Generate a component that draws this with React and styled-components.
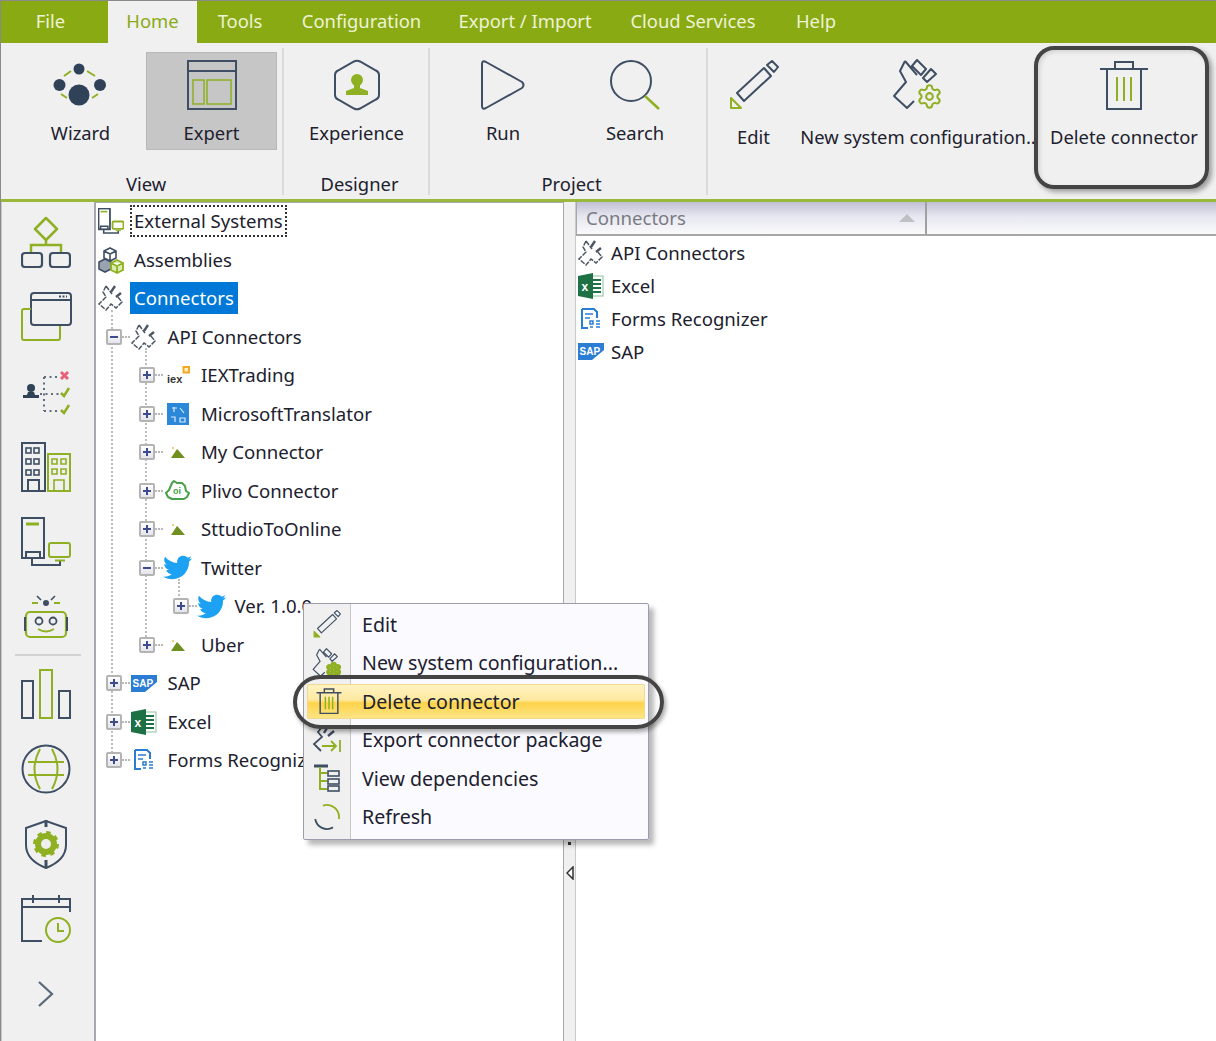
import styled, { createGlobalStyle } from 'styled-components';
import { Settings } from 'lucide-react';
import { FaTwitter } from 'react-icons/fa';

const NAVY = '#3f4f63';
const GREEN = '#8fb022';

const GlobalStyle = createGlobalStyle`
  html, body {
    margin: 0;
    padding: 0;
    background: #fff;
  }
  * {
    box-sizing: border-box;
  }
`;

const Page = styled.div`
  position: relative;
  width: 1216px;
  height: 1041px;
  overflow: hidden;
  display: flex;
  flex-direction: column;
  border-top: 1px solid #8a8a8a;
  border-left: 1px solid #8a8a8a;
  font-family: 'Noto Sans', 'Open Sans', sans-serif;
  font-size: 18.4px;
  color: #20202e;
`;

const MenuBar = styled.div`
  height: 42px;
  flex: none;
  display: flex;
  background: #8aaa14;
`;

const Tab = styled.div`
  width: ${(p) => p.$w}px;
  padding: 0 ${(p) => p.$pr || 0}px 4px 0;
  display: flex;
  align-items: center;
  justify-content: center;
  white-space: nowrap;
  color: ${(p) => (p.$active ? '#8aaa14' : '#eef3d6')};
  background: ${(p) => (p.$active ? '#f0f0f0' : 'transparent')};
`;

const Ribbon = styled.div`
  height: 159px;
  flex: none;
  display: flex;
  background: #f0f0f0;
  border-bottom: 3px solid #9ab83a;
`;

const Group = styled.div`
  width: ${(p) => p.$w}px;
  margin: 5px 0 4px;
  padding: 4px ${(p) => p.$pr || 0}px 0 ${(p) => p.$pl || 0}px;
  display: flex;
  flex-direction: column;
  justify-content: space-between;
  border-right: ${(p) => (p.$last ? 'none' : '2px solid #dadada')};
`;

const GroupRow = styled.div`
  display: flex;
`;

const GroupName = styled.div`
  height: 22px;
  line-height: 22px;
  text-align: center;
  white-space: nowrap;
`;

const RibbonButton = styled.div`
  width: ${(p) => p.$w}px;
  height: 98px;
  flex: none;
  padding-top: 6px;
  display: flex;
  flex-direction: column;
  align-items: center;
  gap: ${(p) => p.$gap || 9}px;
  white-space: nowrap;
  background: ${(p) => (p.$active ? '#c6c6c6' : 'transparent')};
  box-shadow: ${(p) => (p.$active ? 'inset 0 0 0 1px #b8b8b8' : 'none')};
`;

const RibbonIcon = styled.div`
  height: 54px;
  display: flex;
  align-items: center;
  justify-content: center;
`;

const RibbonLabel = styled.div`
  line-height: 23px;
`;

const Callout = styled.div`
  position: absolute;
  left: 1033px;
  top: 45px;
  width: 175px;
  height: 143px;
  border: 4px solid #444;
  border-radius: 20px;
  box-shadow: 3px 3px 5px rgba(0, 0, 0, 0.35), inset 2px 2px 4px rgba(0, 0, 0, 0.12);
`;

const Main = styled.div`
  flex: 1;
  min-height: 0;
  display: flex;
`;

const Rail = styled.div`
  width: 95px;
  flex: none;
  padding: 2px 13px 0;
  display: flex;
  flex-direction: column;
  background: #f0f0f0;
  border-left: 1px solid #c8c8c8;
  border-right: 2px solid #a8a8b0;
`;

const RailItem = styled.div`
  height: 75px;
  flex: none;
  display: flex;
  align-items: center;
  justify-content: center;
  margin-left: -4px;
`;

const RailDivider = styled.div`
  height: 2px;
  flex: none;
  background: #d2d2d2;
`;

const TreePanel = styled.div`
  width: 468px;
  flex: none;
  font-size: 18.6px;
  background: #fff;
  box-shadow: inset 0 1px 0 #a8a8b0;
  border-right: 1px solid #a8a8b0;
`;

const Row = styled.div`
  height: 38.5px;
  display: flex;
  align-items: center;
  white-space: nowrap;
`;

const ExpanderSlot = styled.div`
  width: ${(p) => p.$w}px;
  flex: none;
  display: flex;
  justify-content: flex-end;
  align-items: center;
  padding-right: 8px;
`;

const Expander = styled.div`
  position: relative;
  z-index: 1;
  width: 16px;
  height: 16px;
  border: 2px solid #b4b4b4;
  border-radius: 2px;
  background: linear-gradient(#ffffff, #e4e4ec);
  &::before,
  &::after {
    content: '';
    position: absolute;
    background: #3c4c8c;
  }
  &::before {
    left: 2px;
    right: 2px;
    top: 5px;
    height: 2px;
  }
  &::after {
    display: ${(p) => (p.$open ? 'none' : 'block')};
    top: 2px;
    bottom: 2px;
    left: 5px;
    width: 2px;
  }
`;

const Dash = styled.div`
  width: 8px;
  margin-right: -8px;
  border-top: 2px dotted #b8b8b8;
`;

const NodeIcon = styled.div`
  position: relative;
  z-index: 1;
  width: 29px;
  height: 30px;
  flex: none;
  display: flex;
  align-items: center;
  justify-content: center;
`;

const NodeLabel = styled.div`
  margin-left: 5px;
  padding: 0 2px;
  height: 32px;
  line-height: 28px;
  border: 2px ${(p) => (p.$focus ? 'dotted #333' : 'solid transparent')};
  background: ${(p) => (p.$selected ? '#0078d7' : 'transparent')};
  color: ${(p) => (p.$selected ? '#fff' : 'inherit')};
`;

const Branch = styled.div`
  position: relative;
  &::before {
    content: '';
    position: absolute;
    left: ${(p) => p.$left}px;
    top: -8px;
    bottom: 19px;
    border-left: 2px dotted #bcbcbc;
  }
`;

const Splitter = styled.div`
  width: 12px;
  flex: none;
  padding-top: 634px;
  display: flex;
  flex-direction: column;
  align-items: center;
  gap: 3px;
  background: #f0f0f0;
  border-right: 1px solid #c8c8c8;
`;

const GripDot = styled.div`
  width: 3px;
  height: 3px;
  background: #333;
`;

const ListPanel = styled.div`
  flex: 1;
  min-width: 0;
  font-size: 18.6px;
  background: #fff;
`;

const ListHeader = styled.div`
  height: 34px;
  display: flex;
  background: linear-gradient(#c0c0d4, #e6e7f0 45%, #fafafc);
  border-bottom: 2px solid #a8a8a8;
`;

const ColumnHead = styled.div`
  width: 351px;
  padding: 0 9px 1px;
  display: flex;
  align-items: center;
  justify-content: space-between;
  color: #7a7a80;
  border-left: 1px solid #a8a8a8;
  border-right: 2px solid #a0a0a0;
`;

const SortArrow = styled.div`
  width: 0;
  height: 0;
  margin-right: 1px;
  border-left: 8px solid transparent;
  border-right: 8px solid transparent;
  border-bottom: 8px solid #c0c0c4;
`;

const ListBody = styled.div`
  padding-left: 1px;
`;

const ListRow = styled.div`
  height: 33px;
  display: flex;
  align-items: center;
  gap: 6px;
  white-space: nowrap;
`;

const ListIcon = styled.div`
  width: 28px;
  display: flex;
  justify-content: center;
`;

const ContextMenu = styled.div`
  position: absolute;
  left: 302px;
  top: 602px;
  width: 346px;
  height: 237px;
  padding-top: 1px;
  display: flex;
  flex-direction: column;
  font-size: 19.6px;
  border: 1px solid #9c9cb0;
  border-radius: 2px;
  background: linear-gradient(90deg, #f0f0f0 46px, #c8c8c8 46px, #c8c8c8 47px, #fbfbff 47px);
  box-shadow: 5px 5px 5px rgba(0, 0, 0, 0.28);
  z-index: 2;
`;

const MenuItem = styled.div`
  height: ${(p) => (p.$active ? '34.5px' : '38.5px')};
  margin: ${(p) => (p.$active ? '2px 3px' : '0')};
  flex: none;
  display: flex;
  align-items: center;
  white-space: nowrap;
  border-radius: 2px;
  background: ${(p) =>
    p.$active ? 'linear-gradient(#fff3c4, #fde9a0 45%, #fdd34a 55%, #fde58a)' : 'transparent'};
  box-shadow: ${(p) => (p.$active ? 'inset 0 0 0 1px #f2d98c' : 'none')};
`;

const MenuIcon = styled.div`
  width: ${(p) => (p.$active ? '43px' : '46px')};
  flex: none;
  display: flex;
  justify-content: center;
`;

const MenuLabel = styled.div`
  margin-left: 12px;
`;

const Oval = styled.div`
  position: absolute;
  left: 292px;
  top: 674px;
  width: 371px;
  height: 54px;
  border: 4px solid #444;
  border-radius: 27px;
  box-shadow: 2px 3px 4px rgba(0, 0, 0, 0.35);
  z-index: 3;
`;

/* ribbon drawings */
const WizardIcon = () => (
  <svg width="56" height="44" viewBox="0 0 56 44" fill="none">
    <circle cx="26" cy="6" r="5.5" fill="#2f4258" />
    <circle cx="6.5" cy="22" r="6" fill="#2f4258" />
    <circle cx="47" cy="22" r="6" fill="#2f4258" />
    <circle cx="26" cy="32" r="10.5" fill="#2f4258" />
    <path d="M11 13l7-5M34 8l8 5M8 31l6 4M39 35l6-4" stroke={GREEN} strokeWidth="2" />
  </svg>
);

const ExpertIcon = () => (
  <svg width="50" height="50" viewBox="0 0 50 50" fill="none">
    <rect x="1" y="1" width="48" height="48" stroke={NAVY} strokeWidth="2" />
    <path d="M1 11h48" stroke={NAVY} strokeWidth="2" />
    <rect x="6" y="20" width="11" height="24" stroke={GREEN} strokeWidth="1.5" />
    <rect x="20" y="20" width="24" height="24" stroke={GREEN} strokeWidth="1.5" />
  </svg>
);

const ExperienceIcon = () => (
  <svg width="48" height="52" viewBox="0 0 48 52" fill="none">
    <path
      d="M21 2.5Q24 1 27 2.5L43 11.5Q46 13 46 16V36Q46 39 43 40.5L27 49.5Q24 51 21 49.5L5 40.5Q2 39 2 36V16Q2 13 5 11.5Z"
      stroke={NAVY}
      strokeWidth="2"
    />
    <circle cx="24" cy="21" r="6" fill={GREEN} />
    <path d="M21 26h6v3l8 3v4H13v-4l8-3z" fill={GREEN} />
  </svg>
);

const RunIcon = () => (
  <svg width="46" height="52" viewBox="0 0 46 52" fill="none">
    <path
      d="M2 5Q2 1 6 3L42 23Q45 26 42 29L6 49Q2 51 2 47Z"
      stroke={NAVY}
      strokeWidth="2"
      strokeLinejoin="round"
    />
  </svg>
);

const SearchIcon = () => (
  <svg width="52" height="50" viewBox="0 0 52 50" fill="none">
    <circle cx="22" cy="21" r="20" stroke={NAVY} strokeWidth="2" />
    <path d="M36 36l14 13" stroke={GREEN} strokeWidth="2.5" />
  </svg>
);

const PencilIcon = ({ size = 50, fillTip = false }) => (
  <svg width={size} height={size} viewBox="0 0 50 50" fill="none">
    <path d="M8 33L35 8L42 16L15 41Z" stroke={NAVY} strokeWidth="2" strokeLinejoin="round" />
    <path d="M38 5L43 1L49 7L45 12Z" stroke={NAVY} strokeWidth="2" strokeLinejoin="round" />
    <path
      d="M2 38V48H12Z"
      stroke={GREEN}
      strokeWidth="2"
      fill={fillTip ? GREEN : 'none'}
      strokeLinejoin="round"
    />
  </svg>
);

const PlugGearIcon = ({ size = 52, solidGear = false }) => (
  <svg width={size} height={size} viewBox="0 0 52 52" fill="none">
    <path d="M13 2L8 12L14 23L2 37L15 49L22 42" stroke={NAVY} strokeWidth="2" strokeLinejoin="round" />
    <path
      d="M13 2L25 16M25 1L20 7L29 16L34 10ZM39 10L31 19L35 23L44 15Z"
      stroke={NAVY}
      strokeWidth="2"
      strokeLinejoin="round"
    />
    <Settings x="24" y="24" width="27" height="27" color={GREEN} strokeWidth={solidGear ? 5 : 1.8} />
  </svg>
);

const TrashIcon = ({ size = 50, w = 2 }) => (
  <svg width={size} height={size} viewBox="0 0 50 50" fill="none">
    <path d="M1 9H49M16 9V2H34V9M8 9V49H42V9" stroke={NAVY} strokeWidth={w} />
    <path d="M18 17V41M25 17V41M32 17V41" stroke={GREEN} strokeWidth={w} />
  </svg>
);

/* rail drawings */
const FlowIcon = () => (
  <svg width="50" height="52" viewBox="0 0 50 52" fill="none">
    <path d="M25 2L36 13L25 24L14 13Z" stroke={GREEN} strokeWidth="2.5" strokeLinejoin="round" />
    <path d="M25 24V29M10 37V29H40V37" stroke={GREEN} strokeWidth="2.5" />
    <rect x="1" y="37" width="20" height="14" rx="3" stroke={NAVY} strokeWidth="2.2" />
    <rect x="29" y="37" width="20" height="14" rx="3" stroke={NAVY} strokeWidth="2.2" />
  </svg>
);

const WindowIcon = () => (
  <svg width="52" height="50" viewBox="0 0 52 50" fill="none">
    <rect x="11" y="1" width="40" height="32" rx="3" stroke={NAVY} strokeWidth="2" />
    <path d="M11 8H51" stroke={NAVY} strokeWidth="2" />
    <path d="M39 4.5H47" stroke={NAVY} strokeWidth="2" strokeDasharray="2 1.5" />
    <path d="M11 17H4Q2 17 2 19V46Q2 48 4 48H38Q40 48 40 46V34" stroke={GREEN} strokeWidth="2" />
  </svg>
);

const RoutingIcon = () => (
  <svg width="50" height="46" viewBox="0 0 50 46" fill="none">
    <circle cx="10" cy="19" r="4" fill="#2f4258" />
    <path d="M7 23h6l1 3h4v3H2v-3h4z" fill="#2f4258" />
    <path d="M19 25H38M23 8V42M23 8H36M23 42H38" stroke="#5f6c7c" strokeWidth="2" strokeDasharray="2 3.5" />
    <path d="M40 3l7 7M47 3l-7 7" stroke="#e8607a" strokeWidth="3" />
    <path d="M40 24l3 3 5-8M40 41l3 3 5-8" stroke={GREEN} strokeWidth="2.5" />
  </svg>
);

const windows = [4, 12];
const BuildingsIcon = () => (
  <svg width="50" height="50" viewBox="0 0 50 50" fill="none">
    <rect x="1" y="1" width="23" height="48" stroke={NAVY} strokeWidth="2" />
    {[6, 17, 28].map((y) =>
      windows.map((x) => (
        <rect key={`${x}-${y}`} x={x + 1} y={y} width="5" height="5" stroke={NAVY} strokeWidth="1.6" />
      ))
    )}
    <path d="M7 49V38H18V49" stroke={NAVY} strokeWidth="2" />
    <rect x="27" y="12" width="22" height="37" stroke={GREEN} strokeWidth="2" />
    <path d="M31 17h5v5h-5zM40 17h5v5h-5zM31 27h5v5h-5zM40 27h5v5h-5zM33 49V38H43V49" stroke={GREEN} strokeWidth="1.6" />
  </svg>
);

const DevicesIcon = ({ size = 50 }) => (
  <svg width={size} height={size} viewBox="0 0 50 50" fill="none">
    <rect x="1" y="1" width="22" height="40" stroke={NAVY} strokeWidth={size < 40 ? 3.5 : 2} />
    <path d="M5 7H18" stroke={GREEN} strokeWidth="3" />
    <path d="M5 41V35H19V41M11 41V48H39V44" stroke={NAVY} strokeWidth={size < 40 ? 3 : 2} />
    <rect x="28" y="26" width="21" height="14" rx="2" stroke={GREEN} strokeWidth={size < 40 ? 3.5 : 2} />
    <path d="M34 43.5H44" stroke={GREEN} strokeWidth="2" />
  </svg>
);

const RobotIcon = () => (
  <svg width="46" height="44" viewBox="0 0 46 44" fill="none">
    <circle cx="23" cy="8" r="3" fill={NAVY} />
    <path d="M14 1l4 4M32 1l-4 4" stroke={NAVY} strokeWidth="1.6" />
    <path d="M9 8h6M31 8h6" stroke={GREEN} strokeWidth="2" />
    <rect x="3" y="17" width="40" height="25" rx="4" stroke={GREEN} strokeWidth="2.2" />
    <path d="M2 22v14M44 22v14" stroke={NAVY} strokeWidth="2" />
    <circle cx="16" cy="26" r="3.5" stroke={NAVY} strokeWidth="1.8" />
    <circle cx="30" cy="26" r="3.5" stroke={NAVY} strokeWidth="1.8" />
    <path d="M15 34q8 5 16 0" stroke={GREEN} strokeWidth="2" />
  </svg>
);

const BarsIcon = () => (
  <svg width="50" height="50" viewBox="0 0 50 50" fill="none">
    <rect x="1" y="12" width="11" height="37" stroke={NAVY} strokeWidth="2" />
    <rect x="19" y="1" width="12" height="48" stroke={GREEN} strokeWidth="2" />
    <rect x="38" y="22" width="11" height="27" stroke={NAVY} strokeWidth="2" />
  </svg>
);

const GlobeIcon = () => (
  <svg width="50" height="50" viewBox="0 0 50 50" fill="none">
    <circle cx="25" cy="25" r="23.5" stroke={NAVY} strokeWidth="2" />
    <path d="M7 18H43M7 31H43" stroke={GREEN} strokeWidth="2" />
    <path d="M19 5Q8 25 19 45M31 5Q42 25 31 45" stroke={GREEN} strokeWidth="2" />
  </svg>
);

const ShieldIcon = () => (
  <svg width="44" height="50" viewBox="0 0 44 50" fill="none">
    <path d="M22 2L2 9V26Q2 41 22 49Q42 41 42 26V9Z" stroke={NAVY} strokeWidth="2" />
    <path d="M22 1V8M22 41V49" stroke={NAVY} strokeWidth="3" />
    <circle cx="22" cy="25" r="8" stroke={GREEN} strokeWidth="6" />
    <circle cx="22" cy="25" r="11.5" stroke={GREEN} strokeWidth="3" strokeDasharray="4.5 4.5" />
  </svg>
);

const CalendarIcon = () => (
  <svg width="50" height="50" viewBox="0 0 50 50" fill="none">
    <path d="M21 47H1V5H49V18M1 13H49M12 1V9M38 1V9" stroke={NAVY} strokeWidth="2" />
    <circle cx="37" cy="36" r="12" fill="#f0f0f0" stroke={GREEN} strokeWidth="2" />
    <path d="M37 29V37H43" stroke={GREEN} strokeWidth="2" />
  </svg>
);

const ChevronIcon = () => (
  <svg width="18" height="28" viewBox="0 0 18 28" fill="none">
    <path d="M2 2L15 14L2 26" stroke="#5a6878" strokeWidth="2.2" />
  </svg>
);

/* tree drawings */
const PlugIcon = ({ size = 28 }) => (
  <svg width={size} height={size} viewBox="0 0 28 28" fill="none">
    <path
      d="M9 2L6 8L9 13L2 20L9 26L14 20L19 24L25 18L20 12M9 2L15 10"
      stroke="#4c5664"
      strokeWidth="1.5"
      strokeDasharray="5 1.2"
    />
    <path d="M18 2L14 8M24 9L19 13" stroke="#4c5664" strokeWidth="2.4" />
  </svg>
);

const CubesIcon = () => (
  <svg width="28" height="28" viewBox="0 0 28 28" fill="none">
    <path d="M13 2l6 3v7l-6 3-6-3V5z M7 5l6 3 6-3M13 8v7" stroke={NAVY} strokeWidth="1.6" />
    <path d="M8 13l6 3v7l-6 3-6-3v-7z" fill="#9aa4b0" stroke={NAVY} strokeWidth="1.6" />
    <path d="M20 14l6 3v7l-6 3-6-3v-7z M14 17l6 3 6-3M20 20v7" fill="#dcebb0" stroke={GREEN} strokeWidth="1.8" />
  </svg>
);

const IexIcon = () => (
  <svg width="26" height="20" viewBox="0 0 26 20">
    <text x="2" y="18" fontSize="11" fontWeight="700" fontFamily="Liberation Sans, sans-serif" fill="#333">
      iex
    </text>
    <rect x="18.5" y="2" width="5.5" height="5.5" fill="#fff3c0" stroke="#f5a623" strokeWidth="2" />
  </svg>
);

const TranslatorIcon = () => (
  <svg width="22" height="22" viewBox="0 0 22 22" fill="none">
    <rect width="22" height="22" fill="#2b88d8" />
    <path d="M5 5h5M7 4v5M13 5l4 5M4 14h4v5M13 15h5v4h-5z" stroke="#d6e9fa" strokeWidth="1.2" />
  </svg>
);

const MoundIcon = () => (
  <svg width="16" height="14" viewBox="0 0 16 14">
    <circle cx="3" cy="3" r="1" fill="#e8c040" />
    <path d="M1 13L7 4L9 6L15 13Z" fill="#6f8f1e" />
  </svg>
);

const PlivoIcon = () => (
  <svg width="26" height="24" viewBox="0 0 26 24" fill="none">
    <path
      d="M7 4l2-2 3 2h5l3 3 1 5 3 2-2 4-3 2H7l-4-2-2-4 3-3z"
      stroke="#48a048"
      strokeWidth="2"
      strokeLinejoin="round"
    />
    <text x="8" y="15" fontSize="9" fontWeight="700" fontFamily="Liberation Sans, sans-serif" fill="#48a048">
      oi
    </text>
  </svg>
);

const SapIcon = () => (
  <svg width="26" height="17" viewBox="0 0 26 17">
    <path d="M0 0H26V7L14 17H0Z" fill="#2b7cd3" />
    <text x="1.5" y="11.5" fontSize="10" fontWeight="700" fontFamily="Liberation Sans, sans-serif" fill="#fff">
      SAP
    </text>
  </svg>
);

const ExcelIcon = () => (
  <svg width="26" height="26" viewBox="0 0 26 26" fill="none">
    <rect x="9" y="3" width="16" height="20" fill="#fff" stroke="#8fbf9c" />
    <path d="M15 7h8M15 11h8M15 15h8M15 19h8" stroke="#1e7145" strokeWidth="2" />
    <path d="M0 3L15 0V26L0 23Z" fill="#1e7145" />
    <text x="3.5" y="18" fontSize="12" fontWeight="700" fontFamily="Liberation Sans, sans-serif" fill="#fff">
      x
    </text>
  </svg>
);

const FormsIcon = () => (
  <svg width="24" height="24" viewBox="0 0 24 24" fill="none">
    <path d="M3 2H15L18 5V11M3 2V21H10" stroke="#2b7cd3" strokeWidth="2" />
    <path d="M6 7H14M6 11H11" stroke="#2b7cd3" strokeWidth="1.6" />
    <rect x="9" y="12" width="13" height="10" fill="#fff" />
    <path d="M11 14h3v3h-3zM11 20h3M17 14h4M17 17h4M17 20h4" stroke="#2b7cd3" strokeWidth="1.5" />
  </svg>
);

const PlugArrowIcon = () => (
  <svg width="30" height="30" viewBox="0 0 30 30" fill="none">
    <path d="M10 2L6 7L10 12L2 19L9 26" stroke={NAVY} strokeWidth="1.8" />
    <path d="M12 8L15 3M16 11L22 6" stroke={NAVY} strokeWidth="2.4" />
    <path d="M10 21H24M19 16L24 21L19 26M28 15V27" stroke={GREEN} strokeWidth="1.8" />
  </svg>
);

const TreeIcon = () => (
  <svg width="28" height="28" viewBox="0 0 28 28" fill="none">
    <path d="M1 2H15" stroke={NAVY} strokeWidth="3" />
    <path d="M7 3V25H14M7 9H14M7 17H14" stroke={GREEN} strokeWidth="2" />
    <rect x="15" y="7" width="11" height="5" stroke={NAVY} strokeWidth="1.6" />
    <rect x="15" y="15" width="11" height="5" stroke={NAVY} strokeWidth="1.6" />
    <rect x="15" y="22" width="11" height="5" stroke={NAVY} strokeWidth="1.6" />
  </svg>
);

const RefreshIcon = () => (
  <svg width="28" height="28" viewBox="0 0 28 28" fill="none">
    <path d="M9.9 2.7A12 12 0 0 1 25.8 16" stroke={GREEN} strokeWidth="1.8" />
    <path d="M2.2 16A12 12 0 0 0 20 24.4" stroke={NAVY} strokeWidth="1.8" />
  </svg>
);

const Twitter = () => <FaTwitter size={31} color="#1da1f2" />;

const tabs = [
  ['File', 107, false, 8],
  ['Home', 89, true],
  ['Tools', 86],
  ['Configuration', 157],
  ['Export / Import', 170],
  ['Cloud Services', 166],
  ['Help', 80],
];

const railTop = [FlowIcon, WindowIcon, RoutingIcon, BuildingsIcon, DevicesIcon, RobotIcon];
const railBottom = [BarsIcon, GlobeIcon, ShieldIcon, CalendarIcon, ChevronIcon];

function Node({ level = 0, icon, label, open, focus, selected }) {
  return (
    <Row>
      {level > 0 && (
        <ExpanderSlot $w={33.5 * level}>
          <Expander $open={open} />
          <Dash />
        </ExpanderSlot>
      )}
      <NodeIcon>{icon}</NodeIcon>
      <NodeLabel $focus={focus} $selected={selected}>
        {label}
      </NodeLabel>
    </Row>
  );
}

export default function App() {
  return (
    <>
      <GlobalStyle />
      <Page>
        <MenuBar>
          {tabs.map(([name, w, active, pr]) => (
            <Tab key={name} $w={w} $active={active} $pr={pr}>
              {name}
            </Tab>
          ))}
        </MenuBar>

        <Ribbon>
          <Group $w={283} $pl={14} $pr={5}>
            <GroupRow>
              <RibbonButton $w={131}>
                <RibbonIcon><WizardIcon /></RibbonIcon>
                <RibbonLabel>Wizard</RibbonLabel>
              </RibbonButton>
              <RibbonButton $w={131} $active>
                <RibbonIcon><ExpertIcon /></RibbonIcon>
                <RibbonLabel>Expert</RibbonLabel>
              </RibbonButton>
            </GroupRow>
            <GroupName>View</GroupName>
          </Group>
          <Group $w={146} $pl={7}>
            <GroupRow>
              <RibbonButton $w={131}>
                <RibbonIcon><ExperienceIcon /></RibbonIcon>
                <RibbonLabel>Experience</RibbonLabel>
              </RibbonButton>
            </GroupRow>
            <GroupName>Designer</GroupName>
          </Group>
          <Group $w={278} $pl={7}>
            <GroupRow>
              <RibbonButton $w={132}>
                <RibbonIcon><RunIcon /></RibbonIcon>
                <RibbonLabel>Run</RibbonLabel>
              </RibbonButton>
              <RibbonButton $w={132}>
                <RibbonIcon><SearchIcon /></RibbonIcon>
                <RibbonLabel>Search</RibbonLabel>
              </RibbonButton>
            </GroupRow>
            <GroupName>Project</GroupName>
          </Group>
          <Group $w={508} $last>
            <GroupRow>
              <RibbonButton $w={91} $gap={13}>
                <RibbonIcon><PencilIcon /></RibbonIcon>
                <RibbonLabel>Edit</RibbonLabel>
              </RibbonButton>
              <RibbonButton $w={238} $gap={13}>
                <RibbonIcon><PlugGearIcon /></RibbonIcon>
                <RibbonLabel>New system configuration..</RibbonLabel>
              </RibbonButton>
              <RibbonButton $w={174} $gap={13}>
                <RibbonIcon><TrashIcon /></RibbonIcon>
                <RibbonLabel>Delete connector</RibbonLabel>
              </RibbonButton>
            </GroupRow>
          </Group>
        </Ribbon>

        <Main>
          <Rail>
            {railTop.map((Icon, i) => (
              <RailItem key={i}><Icon /></RailItem>
            ))}
            <RailDivider />
            {railBottom.map((Icon, i) => (
              <RailItem key={i}><Icon /></RailItem>
            ))}
          </Rail>

          <TreePanel>
            <Node icon={<DevicesIcon size={26} />} label="External Systems" focus />
            <Node icon={<CubesIcon />} label="Assemblies" />
            <Node icon={<PlugIcon />} label="Connectors" selected />
            <Branch $left={15}>
              <Node level={1} icon={<PlugIcon />} label="API Connectors" open />
              <Branch $left={49}>
                <Node level={2} icon={<IexIcon />} label="IEXTrading" />
                <Node level={2} icon={<TranslatorIcon />} label="MicrosoftTranslator" />
                <Node level={2} icon={<MoundIcon />} label="My Connector" />
                <Node level={2} icon={<PlivoIcon />} label="Plivo Connector" />
                <Node level={2} icon={<MoundIcon />} label="SttudioToOnline" />
                <Node level={2} icon={<Twitter />} label="Twitter" open />
                <Branch $left={82}>
                  <Node level={3} icon={<Twitter />} label="Ver. 1.0.0" />
                </Branch>
                <Node level={2} icon={<MoundIcon />} label="Uber" />
              </Branch>
              <Node level={1} icon={<SapIcon />} label="SAP" />
              <Node level={1} icon={<ExcelIcon />} label="Excel" />
              <Node level={1} icon={<FormsIcon />} label="Forms Recognizer" />
            </Branch>
          </TreePanel>

          <Splitter>
            <GripDot />
            <GripDot />
            <svg width="8" height="14" viewBox="0 0 8 14" style={{ marginTop: 18 }}>
              <path d="M7 1L1 7L7 13Z" fill="#fff" stroke="#333" strokeWidth="1.5" />
            </svg>
          </Splitter>

          <ListPanel>
            <ListHeader>
              <ColumnHead>
                Connectors
                <SortArrow />
              </ColumnHead>
            </ListHeader>
            <ListBody>
              <ListRow><ListIcon><PlugIcon /></ListIcon>API Connectors</ListRow>
              <ListRow><ListIcon><ExcelIcon /></ListIcon>Excel</ListRow>
              <ListRow><ListIcon><FormsIcon /></ListIcon>Forms Recognizer</ListRow>
              <ListRow><ListIcon><SapIcon /></ListIcon>SAP</ListRow>
            </ListBody>
          </ListPanel>
        </Main>

        <ContextMenu>
          <MenuItem>
            <MenuIcon><PencilIcon size={28} fillTip /></MenuIcon>
            <MenuLabel>Edit</MenuLabel>
          </MenuItem>
          <MenuItem>
            <MenuIcon><PlugGearIcon size={30} solidGear /></MenuIcon>
            <MenuLabel>New system configuration...</MenuLabel>
          </MenuItem>
          <MenuItem $active>
            <MenuIcon $active><TrashIcon size={26} w={2.8} /></MenuIcon>
            <MenuLabel>Delete connector</MenuLabel>
          </MenuItem>
          <MenuItem>
            <MenuIcon><PlugArrowIcon /></MenuIcon>
            <MenuLabel>Export connector package</MenuLabel>
          </MenuItem>
          <MenuItem>
            <MenuIcon><TreeIcon /></MenuIcon>
            <MenuLabel>View dependencies</MenuLabel>
          </MenuItem>
          <MenuItem>
            <MenuIcon><RefreshIcon /></MenuIcon>
            <MenuLabel>Refresh</MenuLabel>
          </MenuItem>
        </ContextMenu>

        <Callout />
        <Oval />
      </Page>
    </>
  );
}
